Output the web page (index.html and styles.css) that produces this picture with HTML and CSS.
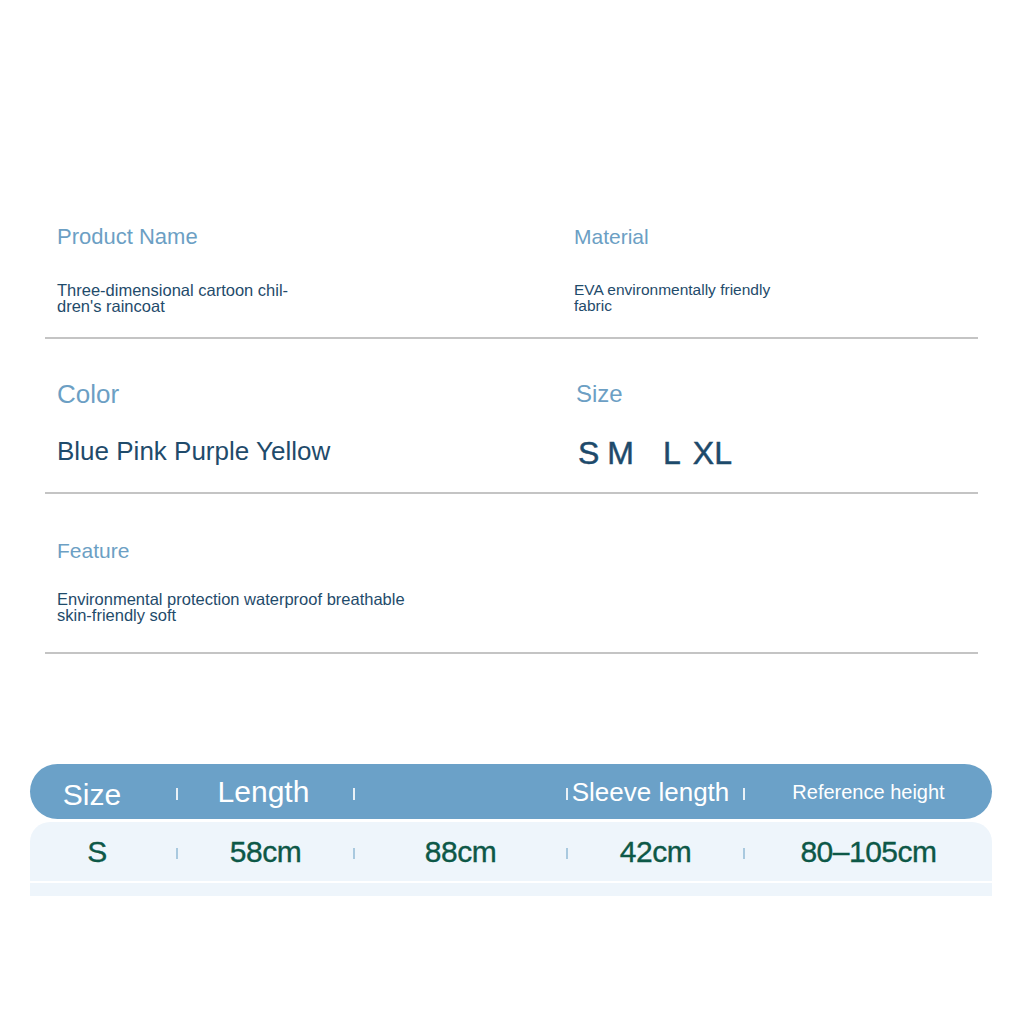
FILE: index.html
```html
<!DOCTYPE html>
<html lang="en">
<head>
<meta charset="utf-8">
<title>Raincoat specification</title>
<link rel="stylesheet" href="styles.css">
</head>
<body>
<div class="page">
  <section class="spec spec-1">
    <div class="col">
      <div class="label lbl-22">Product Name</div>
      <div class="value val-165">Three-dimensional cartoon chil-<br>dren's raincoat</div>
    </div>
    <div class="col">
      <div class="label lbl-21">Material</div>
      <div class="value val-155">EVA environmentally friendly<br>fabric</div>
    </div>
  </section>
  <section class="spec spec-2">
    <div class="col">
      <div class="label lbl-26">Color</div>
      <div class="value val-26">Blue Pink Purple Yellow</div>
    </div>
    <div class="col">
      <div class="label lbl-24 shift-2">Size</div>
      <div class="value val-32 sizes"><span class="sz sz-s">S</span><span class="sz sz-m">M</span><span class="sz sz-l">L</span><span class="sz">XL</span></div>
    </div>
  </section>
  <section class="spec spec-3">
    <div class="col">
      <div class="label lbl-21">Feature</div>
      <div class="value val-165">Environmental protection waterproof breathable<br>skin-friendly soft</div>
    </div>
    <div class="col"></div>
  </section>
</div>

<div class="table">
  <div class="trow thead">
    <div class="cell c-first head-size">Size</div>
    <span class="tick"></span>
    <div class="cell head-30">Length</div>
    <span class="tick"></span>
    <div class="cell"></div>
    <span class="tick"></span>
    <div class="cell head-sleeve">Sleeve length</div>
    <span class="tick"></span>
    <div class="cell head-ref">Reference height</div>
  </div>
  <div class="trow tbody">
    <div class="cell c-first data-s">S</div>
    <span class="tick"></span>
    <div class="cell">58cm</div>
    <span class="tick"></span>
    <div class="cell">88cm</div>
    <span class="tick"></span>
    <div class="cell">42cm</div>
    <span class="tick"></span>
    <div class="cell">80–105cm</div>
  </div>
  <div class="tstrip"></div>
</div>
</body>
</html>
```
FILE: styles.css
```css
* { box-sizing: border-box; }

html, body {
  margin: 0;
  padding: 0;
  background: #ffffff;
}

body {
  font-family: "Liberation Sans", Arial, sans-serif;
  width: 1024px;
  height: 1024px;
  overflow: hidden;
}

.page {
  padding: 224px 46px 0 45px;
}

.spec {
  display: grid;
  grid-template-columns: 517px 1fr;
  padding-left: 12px;
  border-bottom: 2px solid #c4c4c4;
}

.col {
  display: flex;
  flex-direction: column;
}

.label {
  color: #6c9fc4;
  white-space: nowrap;
}

.value {
  color: #1f4b6b;
  white-space: nowrap;
}

.spec-1 { padding-bottom: 23px; }
.spec-1 .label { height: 26px; line-height: 26px; }
.spec-1 .value { margin-top: 32px; height: 32px; line-height: 16px; }

.spec-2 { padding-top: 40px; padding-bottom: 21px; }
.spec-2 .label { height: 30px; line-height: 30px; }
.spec-2 .value { margin-top: 22px; height: 40px; line-height: 40px; }

.spec-3 { padding-top: 44px; padding-bottom: 29px; }
.spec-3 .label { height: 26px; line-height: 26px; }
.spec-3 .value { margin-top: 27px; height: 32px; line-height: 16px; }

.lbl-22 { font-size: 22px; }
.lbl-21 { font-size: 21px; }
.lbl-26 { font-size: 26px; }
.lbl-24 { font-size: 24px; }

.val-165 { font-size: 16.5px; }
.val-155 { font-size: 15.5px; }
.val-26 { font-size: 26px; }
.val-32 { font-size: 32px; padding-top: 2px; }

.shift-2 { margin-left: 2px; }

.sizes {
  display: flex;
  flex-direction: row;
  margin-left: 4px;
  -webkit-text-stroke: 0.5px #1f4b6b;
  color: #1d4a6b;
}

.sz-s { margin-right: 8px; }
.sz-m { margin-right: 27px; letter-spacing: 2px; }
.sz-l { margin-right: 12px; }

/* size table */
.table {
  margin: 110px 32px 0 30px;
  width: 962px;
}

.trow {
  display: grid;
  grid-template-columns: 146px 2px 175px 2px 211px 2px 175px 2px 1fr;
  align-items: center;
}

.cell {
  display: flex;
  align-items: center;
  justify-content: center;
  line-height: 1;
  white-space: nowrap;
}

.tick {
  display: block;
  width: 1.5px;
}

.thead {
  height: 55px;
  border-radius: 28px;
  background: #6ba1c8;
  color: #ffffff;
}

.thead .tick {
  height: 12px;
  margin-top: 5px;
  background: rgba(255, 255, 255, 0.85);
}

.head-size {
  font-size: 30px;
  padding-right: 22px;
  padding-top: 6px;
}

.head-30 { font-size: 30px; padding-right: 4px; }
.head-sleeve { font-size: 26px; padding-right: 10px; }
.head-ref { font-size: 20px; }

.tbody {
  margin-top: 3px;
  height: 59px;
  border-radius: 20px 20px 0 0;
  background: #eef5fb;
  color: #0d5847;
}

.tbody .cell {
  font-size: 30px;
  letter-spacing: -0.5px;
  -webkit-text-stroke: 0.35px #0d5847;
}

.tbody .tick {
  height: 11px;
  margin-top: 4px;
  background: #a9c9df;
}

.data-s { padding-right: 12px; }

.tstrip {
  margin-top: 2px;
  height: 13px;
  background: #eef5fb;
}
```
